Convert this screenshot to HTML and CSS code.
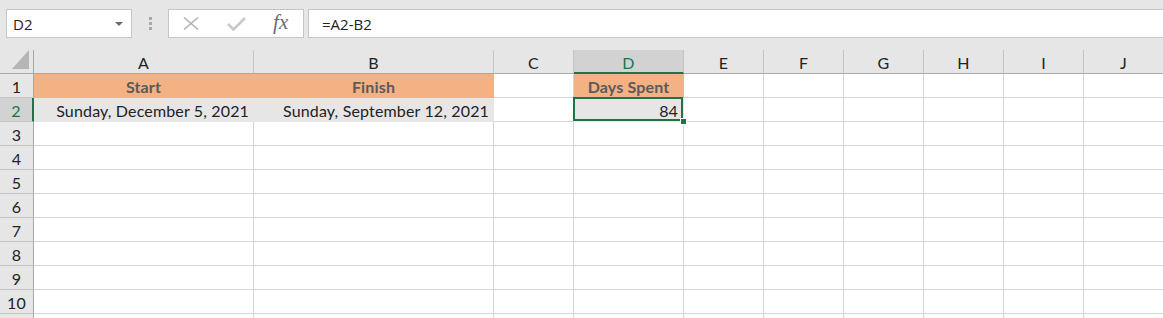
FILE: index.html
```html
<!DOCTYPE html>
<html lang="en">
<head>
    <meta charset="UTF-8">
    <title>Days Spent - Excel</title>
    <link rel="stylesheet" href="styles.css">
</head>
<body>
    <div class="toolbar">
        <div class="namebox">
            <span>D2</span>
            <svg class="arrow" width="8" height="4" viewBox="0 0 8 4"><polygon points="0,0 8,0 4,4" fill="#6b6b6b"/></svg>
        </div>
        <div class="grip"><i></i><i></i><i></i></div>
        <div class="fbuttons">
            <span class="slot">
                <svg width="16" height="13" viewBox="0 0 16 13"><path d="M1 0.5 L15 12.5 M15 0.5 L1 12.5" stroke="#b4b4b4" stroke-width="1.6" fill="none"/></svg>
            </span>
            <span class="slot">
                <svg width="19" height="14" viewBox="0 0 19 14"><path d="M1 7 L6.5 12.5 L18 1" stroke="#c9c9c9" stroke-width="2.6" fill="none"/></svg>
            </span>
            <span class="slot fx">fx</span>
        </div>
        <div class="formula">=A2-B2</div>
    </div>

    <div class="sheet">
        <div class="row head">
            <div class="corner"><svg width="18" height="20" viewBox="0 0 18 20"><polygon points="17,0 17,19 0,19" fill="#b5b5b5"/></svg></div>
            <div class="col">A</div>
            <div class="col">B</div>
            <div class="col">C</div>
            <div class="col active">D</div>
            <div class="col">E</div>
            <div class="col">F</div>
            <div class="col">G</div>
            <div class="col">H</div>
            <div class="col">I</div>
            <div class="col">J</div>
        </div>
        <div class="row">
            <div class="num">1</div>
            <div class="cell title">Start</div>
            <div class="cell title">Finish</div>
            <div class="cell"></div>
            <div class="cell title">Days Spent</div>
            <div class="cell"></div><div class="cell"></div><div class="cell"></div><div class="cell"></div><div class="cell"></div><div class="cell"></div>
        </div>
        <div class="row">
            <div class="num active">2</div>
            <div class="cell shade right">Sunday, December 5, 2021</div>
            <div class="cell shade right">Sunday, September 12, 2021</div>
            <div class="cell"></div>
            <div class="cell shade right selected">84<span class="handle"></span></div>
            <div class="cell"></div><div class="cell"></div><div class="cell"></div><div class="cell"></div><div class="cell"></div><div class="cell"></div>
        </div>
        <div class="row">
            <div class="num">3</div>
            <div class="cell"></div><div class="cell"></div><div class="cell"></div><div class="cell"></div><div class="cell"></div>
            <div class="cell"></div><div class="cell"></div><div class="cell"></div><div class="cell"></div><div class="cell"></div>
        </div>
        <div class="row">
            <div class="num">4</div>
            <div class="cell"></div><div class="cell"></div><div class="cell"></div><div class="cell"></div><div class="cell"></div>
            <div class="cell"></div><div class="cell"></div><div class="cell"></div><div class="cell"></div><div class="cell"></div>
        </div>
        <div class="row">
            <div class="num">5</div>
            <div class="cell"></div><div class="cell"></div><div class="cell"></div><div class="cell"></div><div class="cell"></div>
            <div class="cell"></div><div class="cell"></div><div class="cell"></div><div class="cell"></div><div class="cell"></div>
        </div>
        <div class="row">
            <div class="num">6</div>
            <div class="cell"></div><div class="cell"></div><div class="cell"></div><div class="cell"></div><div class="cell"></div>
            <div class="cell"></div><div class="cell"></div><div class="cell"></div><div class="cell"></div><div class="cell"></div>
        </div>
        <div class="row">
            <div class="num">7</div>
            <div class="cell"></div><div class="cell"></div><div class="cell"></div><div class="cell"></div><div class="cell"></div>
            <div class="cell"></div><div class="cell"></div><div class="cell"></div><div class="cell"></div><div class="cell"></div>
        </div>
        <div class="row">
            <div class="num">8</div>
            <div class="cell"></div><div class="cell"></div><div class="cell"></div><div class="cell"></div><div class="cell"></div>
            <div class="cell"></div><div class="cell"></div><div class="cell"></div><div class="cell"></div><div class="cell"></div>
        </div>
        <div class="row">
            <div class="num">9</div>
            <div class="cell"></div><div class="cell"></div><div class="cell"></div><div class="cell"></div><div class="cell"></div>
            <div class="cell"></div><div class="cell"></div><div class="cell"></div><div class="cell"></div><div class="cell"></div>
        </div>
        <div class="row">
            <div class="num">10</div>
            <div class="cell"></div><div class="cell"></div><div class="cell"></div><div class="cell"></div><div class="cell"></div>
            <div class="cell"></div><div class="cell"></div><div class="cell"></div><div class="cell"></div><div class="cell"></div>
        </div>
        <div class="row">
            <div class="num"></div>
            <div class="cell"></div><div class="cell"></div><div class="cell"></div><div class="cell"></div><div class="cell"></div>
            <div class="cell"></div><div class="cell"></div><div class="cell"></div><div class="cell"></div><div class="cell"></div>
        </div>
    </div>
</body>
</html>
```

FILE: styles.css
```css
* {
    box-sizing: border-box;
}
body {
    margin: 0;
    background-color: #e6e6e6;
    font-family: Lato, "Noto Sans", sans-serif;
    color: #222;
    overflow: hidden;
    width: 1163px;
    height: 318px;
}
.toolbar {
    display: flex;
    align-items: flex-start;
    height: 50px;
    padding: 9px 0 0 6px;
    background-color: #e6e6e6;
    font-family: "Open Sans", "Noto Sans", sans-serif;
    font-size: 15px;
}
.namebox {
    display: flex;
    align-items: center;
    justify-content: space-between;
    width: 126px;
    height: 29px;
    padding: 1px 8px 0 6px;
    background: #fff;
    border: 1px solid #c6c6c6;
}
.grip {
    display: flex;
    flex-direction: column;
    gap: 2px;
    margin: 8px 0 0 17px;
    width: 3px;
}
.grip i {
    display: block;
    width: 3px;
    height: 3px;
    background: #a9a9a9;
}
.fbuttons {
    display: flex;
    margin-left: 16px;
    width: 136px;
    height: 29px;
    background: #fff;
    border: 1px solid #c6c6c6;
}
.slot {
    display: flex;
    align-items: center;
    justify-content: center;
    width: 45px;
}
.fx {
    font-family: "Liberation Serif", serif;
    font-style: italic;
    font-size: 21px;
    color: #6d6d6d;
    padding-bottom: 3px;
}
.formula {
    flex: 1;
    height: 29px;
    margin-left: 4px;
    padding: 4px 0 0 13px;
    background: #fff;
    border: 1px solid #c6c6c6;
    border-right: none;
}
.sheet {
    background: #fff;
    font-size: 16px;
    letter-spacing: 0.15px;
}
.row {
    display: grid;
    grid-template-columns: 34px 220px 240px 80px 110px repeat(6, 80px);
    height: 24px;
}
.head {
    background: #e6e6e6;
}
.corner {
    display: flex;
    align-items: flex-end;
    justify-content: flex-end;
    padding: 0 3px 3px 0;
    border-right: 1px solid #a8a8a8;
    border-bottom: 1px solid #a8a8a8;
}
.col {
    display: flex;
    align-items: center;
    justify-content: center;
    padding-top: 2px;
    border-right: 1px solid #c4c4c4;
    border-bottom: 1px solid #a8a8a8;
}
.col.active {
    background: #d2d2d2;
    color: #217346;
    border-bottom: 2px solid #217346;
}
.num {
    display: flex;
    align-items: flex-end;
    justify-content: center;
    padding-bottom: 1px;
    background: #e6e6e6;
    border-right: 1px solid #a8a8a8;
    border-bottom: 1px solid #c4c4c4;
}
.num.active {
    background: #d2d2d2;
    color: #217346;
    border-right: 2px solid #217346;
}
.cell {
    display: flex;
    align-items: flex-end;
    padding: 0 4px 1px;
    white-space: nowrap;
    border-right: 1px solid #d4d4d4;
    border-bottom: 1px solid #d4d4d4;
}
.title {
    justify-content: center;
    font-weight: bold;
    color: #5a5a5a;
    background: #f4b183;
    border-color: #f4b183;
}
.shade {
    background: #e7e6e6;
    border-color: #e7e6e6;
}
.right {
    justify-content: flex-end;
}
.selected {
    position: relative;
    padding-right: 5px;
}
.selected::before {
    content: "";
    position: absolute;
    left: -1px;
    top: -1px;
    right: 0;
    bottom: 0;
    border: 2px solid #217346;
}
.handle {
    position: absolute;
    right: -4px;
    bottom: -4px;
    width: 7px;
    height: 7px;
    background: #217346;
    border: 1px solid #fff;
}
```
